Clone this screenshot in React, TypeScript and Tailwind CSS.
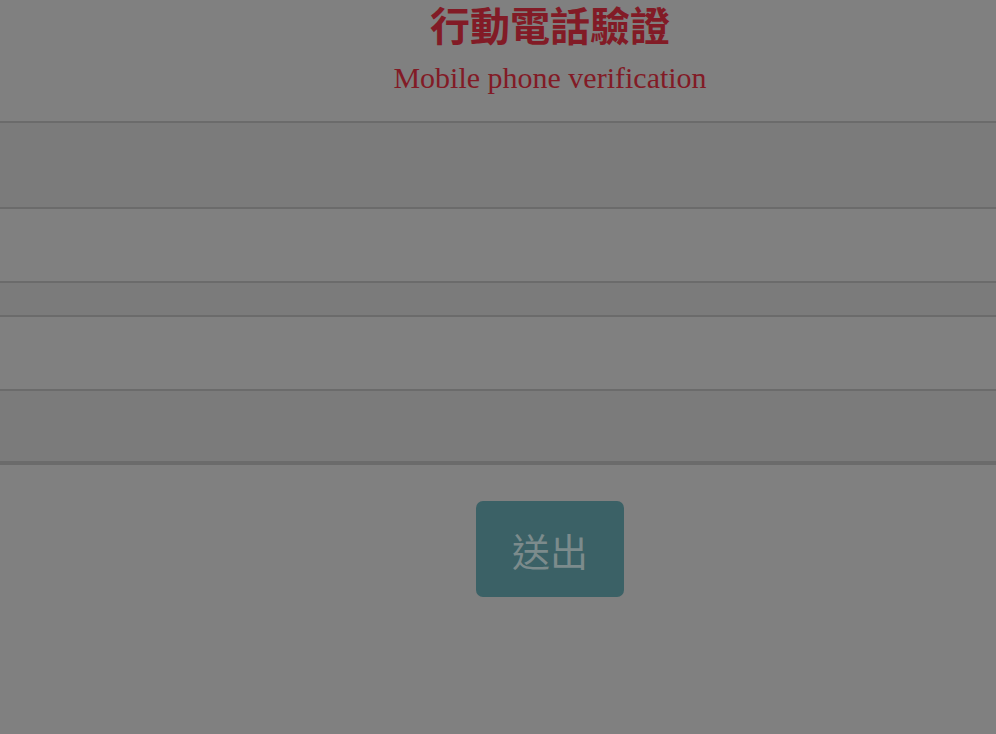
export default function App() {
  // rows of the (empty) verification form; heights include the 2px top rule
  const rows = [
    { h: "h-[84px]", bg: "bg-[#7b7b7b]" },
    { h: "h-[74px]", bg: "bg-[#808080]" },
    { h: "h-[34px]", bg: "bg-[#7b7b7b]" },
    { h: "h-[74px]", bg: "bg-[#808080]" },
    { h: "h-[72px]", bg: "bg-[#7b7b7b]" },
  ];

  return (
    <div className="min-h-screen bg-[#808080]">
      {/* Header */}
      <div className="h-[121px] pl-[104px] text-center text-[#821b26]">
        <h1
          className="text-[40px] leading-[48px] font-bold"
          style={{ fontFamily: '"Noto Sans CJK TC", "Noto Sans", sans-serif' }}
        >
          行動電話驗證
        </h1>
        <p
          className="mt-[12px] text-[30px] leading-[36px]"
          style={{ fontFamily: '"Liberation Serif", serif' }}
        >
          Mobile phone verification
        </p>
      </div>

      {/* Form rows */}
      <div className="border-t-2 border-b-4 border-[#6b6b6b]">
        {rows.map((row, i) => (
          <div
            key={i}
            className={`${row.h} ${row.bg} ${i > 0 ? "border-t-2 border-[#6b6b6b]" : ""}`}
          />
        ))}
      </div>

      {/* Submit */}
      <div className="flex justify-center pl-[104px] pt-[36px]">
        <button
          className="w-[148px] h-[96px] rounded-[7px] bg-[#3b6166] text-[#7c8b8c] text-[38px]"
          style={{ fontFamily: '"Noto Sans CJK TC", "Noto Sans", sans-serif' }}
        >
          送出
        </button>
      </div>
    </div>
  );
}
